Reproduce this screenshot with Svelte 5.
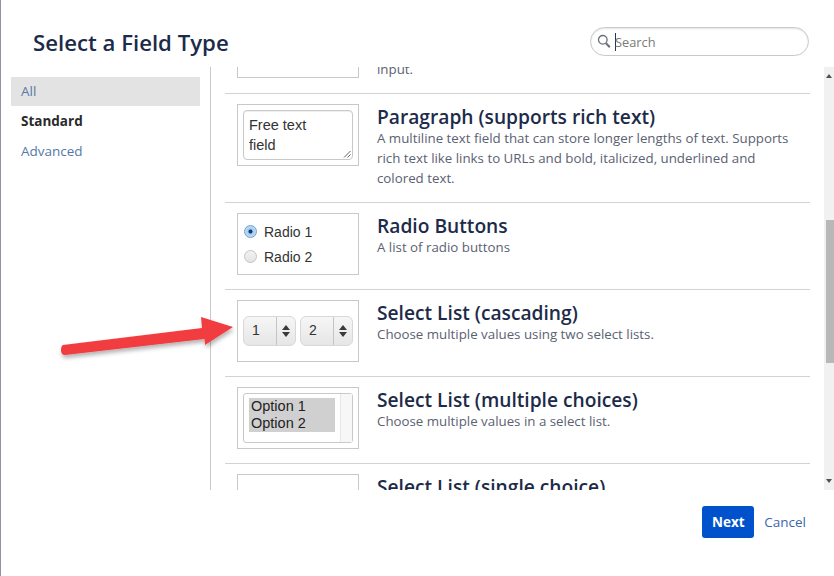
<script>
  const categories = [
    { label: 'All', active: true },
    { label: 'Standard', bold: true },
    { label: 'Advanced' }
  ];

  const fields = [
    {
      kind: 'paragraph',
      title: 'Paragraph (supports rich text)',
      desc: 'A multiline text field that can store longer lengths of text. Supports rich text like links to URLs and bold, italicized, underlined and colored text.'
    },
    { kind: 'radio', title: 'Radio Buttons', desc: 'A list of radio buttons' },
    { kind: 'cascade', title: 'Select List (cascading)', desc: 'Choose multiple values using two select lists.' },
    { kind: 'multi', title: 'Select List (multiple choices)', desc: 'Choose multiple values in a select list.' },
    { kind: 'single', title: 'Select List (single choice)', desc: 'Choose a single value in a select list.' }
  ];
</script>

{#snippet stepper(value)}
  <span class="stepper">
    <span class="stepper-value">{value}</span>
    <span class="stepper-arrows"><i class="up"></i><i class="down"></i></span>
  </span>
{/snippet}

<div class="dialog">
  <header class="top">
    <h1>Select a Field Type</h1>
    <div class="search">
      <svg width="14" height="15" viewBox="0 0 14 15" fill="none" stroke="#6b6f76">
        <circle cx="5.800" cy="5.800" r="4.300" stroke-width="1.300" />
        <path d="M9 9.200l3.800 4" stroke-width="2" />
      </svg>
      <span class="caret"></span>
      <span class="placeholder">Search</span>
    </div>
  </header>

  <div class="body">
    <nav class="side">
      {#each categories as cat}
        <div class="cat" class:active={cat.active} class:bold={cat.bold}>{cat.label}</div>
      {/each}
    </nav>

    <div class="list">
      <div class="rows">
        <div class="row row-cut">
          <div class="preview preview-cut"></div>
          <div class="info"><p>input.</p></div>
        </div>
        {#each fields as f}
          <div class="row">
            <div class="preview">
              {#if f.kind === 'paragraph'}
                <div class="textarea">
                  Free text<br />field
                  <svg class="grip" width="8" height="8" viewBox="0 0 8 8" stroke="#666" fill="none">
                    <path d="M1 7.500L7.500 1M4.500 7.500L7.500 4.500" />
                  </svg>
                </div>
              {:else if f.kind === 'radio'}
                <div class="radios">
                  <div class="radio-line"><span class="radio on"></span>Radio 1</div>
                  <div class="radio-line"><span class="radio"></span>Radio 2</div>
                </div>
              {:else if f.kind === 'cascade'}
                <div class="steppers">
                  {@render stepper(1)}
                  {@render stepper(2)}
                </div>
              {:else if f.kind === 'multi'}
                <div class="listbox">
                  <div class="options">Option 1<br />Option 2</div>
                  <div class="listbox-bar"></div>
                </div>
              {/if}
            </div>
            <div class="info">
              <h2>{f.title}</h2>
              <p>{f.desc}</p>
            </div>
          </div>
        {/each}
      </div>
      <div class="scrollbar">
        <i class="sb-up"></i>
        <div class="thumb"></div>
        <i class="sb-down"></i>
      </div>
      <svg class="arrow" width="174" height="60" viewBox="0 0 174 60">
        <defs>
          <filter id="arrow-shadow" x="-10%" y="-30%" width="120%" height="170%">
            <feDropShadow dx="1" dy="3" stdDeviation="2" flood-color="#000" flood-opacity="0.3" />
          </filter>
        </defs>
        <path
          d="M3 39L142 22L141 11L173 21L145 39L144.500 33L5 49Q1 49 1 44Q1 40 3 39Z"
          fill="#f23d40"
          filter="url(#arrow-shadow)"
        />
      </svg>
    </div>
  </div>

  <footer class="actions">
    <button class="next">Next</button>
    <button class="cancel">Cancel</button>
  </footer>
</div>

<style>
  :global(body) {
    margin: 0;
    background: #fff;
  }

  .dialog {
    width: 834px;
    height: 576px;
    box-sizing: border-box;
    border-left: 1px solid #8d93a3;
    font-family: "Open Sans", "Noto Sans", sans-serif;
    color: #172b4d;
    overflow: hidden;
    display: flex;
    flex-direction: column;
  }

  .top {
    height: 67px;
    flex: none;
    display: flex;
    justify-content: space-between;
    align-items: flex-start;
    padding: 0 25px 0 32px;
  }

  h1 {
    margin: 27px 0 0;
    font-size: 22.200px;
    line-height: 32px;
    font-weight: 600;
    color: #1c2b49;
  }

  .search {
    margin-top: 27px;
    width: 219px;
    height: 29px;
    box-sizing: border-box;
    border: 1px solid #c9c9c9;
    border-radius: 15px;
    box-shadow: inset 0 1px 2px #e4e4e4;
    display: flex;
    align-items: center;
    padding-left: 6px;
    font-size: 12.800px;
    color: #7a7a7a;
  }

  .caret {
    width: 1px;
    height: 18px;
    background: #2a3550;
    margin: 0 -1px 0 4px;
  }

  .body {
    height: 423px;
    flex: none;
    display: flex;
  }

  .side {
    width: 210px;
    flex: none;
    box-sizing: border-box;
    border-right: 1px solid #c9c9c9;
    padding: 10px 10px 0;
    font-size: 13.500px;
  }

  .cat {
    height: 29px;
    margin-bottom: 1px;
    line-height: 29px;
    padding-left: 10px;
    width: 189px;
    box-sizing: border-box;
    color: #5578a8;
  }

  .cat.active {
    background: #e3e3e3;
  }

  .cat.bold {
    color: #2a2a2a;
    font-weight: 700;
  }

  .list {
    flex: 1;
    min-width: 0;
    display: flex;
  }

  .rows {
    flex: 1;
    min-width: 0;
    height: 423px;
    overflow: hidden;
    padding: 0 14px;
  }

  .row {
    display: flex;
    gap: 18px;
    padding: 10px 12px 22px;
    border-bottom: 1px solid #d3d3d3;
    box-sizing: border-box;
    height: 87px;
  }

  .row:nth-child(2) {
    height: 109px;
  }

  .row-cut {
    height: 27px;
    padding: 0 12px;
    overflow: hidden;
  }

  .preview {
    width: 122px;
    height: 62px;
    flex: none;
    box-sizing: border-box;
    border: 1px solid #c8c8c8;
    padding: 5px;
    font-family: "Liberation Sans", Arial, sans-serif;
    font-size: 14.500px;
    color: #333;
  }

  .preview-cut {
    height: 10px;
    border-top: 0;
  }

  .textarea {
    position: relative;
    height: 50px;
    width: 110px;
    box-sizing: border-box;
    border: 1px solid #c9c9c9;
    border-radius: 4px;
    padding: 4px 5px;
    line-height: 20px;
    box-shadow: inset 0 1px 1px #eee;
  }

  .grip {
    position: absolute;
    right: 1px;
    bottom: 1px;
  }

  .radios {
    padding: 0 1px;
    font-size: 14px;
  }

  .radio-line {
    height: 25px;
    display: flex;
    align-items: center;
    gap: 7px;
  }

  .radio {
    width: 13px;
    height: 13px;
    box-sizing: border-box;
    border: 1px solid #c4c4c4;
    border-radius: 50%;
    background: linear-gradient(#f2f2f2, #e4e4e4);
  }

  .radio.on {
    border-color: #6e9fd2;
    background: radial-gradient(circle, #123d73 0 1.500px, #a9cdf0 2.500px, #cfe3f7 100%);
  }

  .steppers {
    display: flex;
    gap: 4px;
    padding-top: 10px;
  }

  .stepper {
    width: 53px;
    height: 30px;
    box-sizing: border-box;
    border: 1px solid #d8d8d8;
    border-radius: 6px;
    background: linear-gradient(#f6f6f6, #e6e6e6);
    display: flex;
    font-size: 14px;
  }

  .stepper-value {
    flex: 1;
    padding: 5px 0 0 8px;
  }

  .stepper-arrows {
    width: 18px;
    border-left: 1px solid #c4c4c4;
    display: flex;
    flex-direction: column;
    align-items: center;
    justify-content: center;
    gap: 2px;
  }

  .up, .down {
    width: 0;
    height: 0;
    border-left: 4px solid transparent;
    border-right: 4px solid transparent;
  }

  .up {
    border-bottom: 5px solid #3a3a3a;
  }

  .down {
    border-top: 5px solid #3a3a3a;
  }

  .listbox {
    height: 50px;
    width: 110px;
    box-sizing: border-box;
    border: 1px solid #c9c9c9;
    border-radius: 3px;
    display: flex;
    padding-top: 4px;
  }

  .options {
    width: 87px;
    height: 34px;
    margin-left: 5px;
    padding-left: 2px;
    box-sizing: border-box;
    background: #d0d0d0;
    line-height: 17px;
    color: #222;
  }

  .listbox-bar {
    width: 11px;
    margin: -4px 0 0 5px;
    background: #f7f7f7;
    border-left: 1px solid #e6e6e6;
  }

  .info {
    min-width: 0;
  }

  h2 {
    margin: 1px 0 -1px;
    font-size: 19.200px;
    line-height: 24px;
    font-weight: 600;
    color: #1c2b49;
  }

  .info p {
    margin: 0;
    font-size: 13.300px;
    line-height: 20px;
    color: #5a6272;
  }

  .row-cut .info p {
    margin-top: -8px;
  }

  .scrollbar {
    width: 10px;
    flex: none;
    background: #f1f1f1;
    position: relative;
  }

  .thumb {
    position: absolute;
    top: 153px;
    left: 2px;
    right: 0;
    height: 143px;
    background: #b8b8b8;
  }

  .sb-up, .sb-down {
    position: absolute;
    left: 2px;
    width: 0;
    height: 0;
    border-left: 3px solid transparent;
    border-right: 3px solid transparent;
  }

  .sb-up {
    top: 7px;
    border-bottom: 4px solid #505050;
  }

  .sb-down {
    bottom: 7px;
    border-top: 4px solid #505050;
  }

  .arrow {
    position: absolute;
    left: 60px;
    top: 306px;
    overflow: visible;
  }

  .actions {
    flex: none;
    display: flex;
    justify-content: flex-end;
    align-items: flex-start;
    gap: 10px;
    padding: 16px 28px 0 0;
  }

  button {
    font-family: inherit;
    font-size: 13.500px;
    border: 0;
    cursor: pointer;
  }

  .next {
    width: 52px;
    height: 32px;
    border-radius: 3px;
    background: #0052cc;
    color: #fff;
    font-weight: 700;
    padding: 0;
  }

  .cancel {
    height: 32px;
    padding: 0;
    background: none;
    color: #3b66b0;
  }
</style>
